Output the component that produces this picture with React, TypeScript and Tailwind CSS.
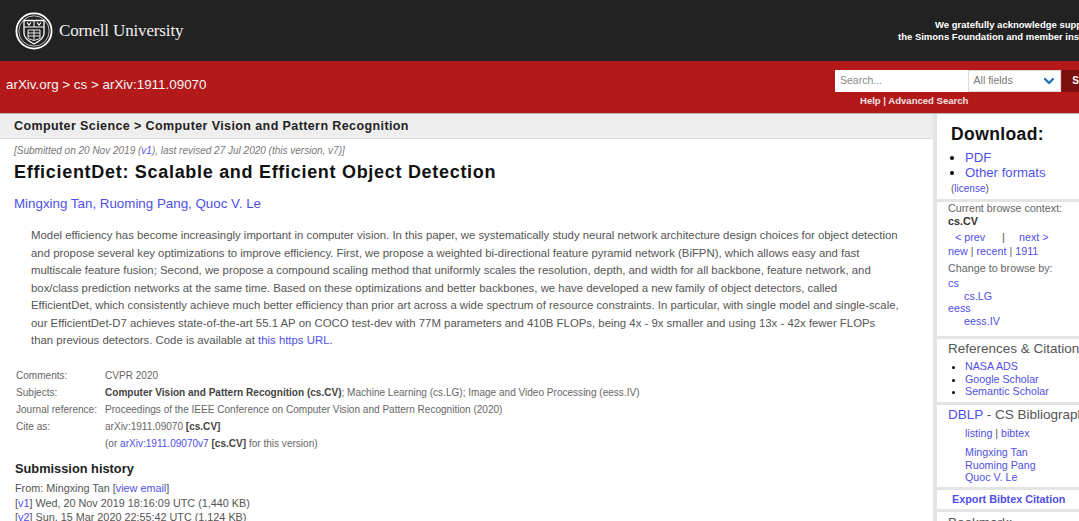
import { ChevronDown } from "lucide-react";

const link = "text-[#4f4fe8]";

const Crest = () => (
  <svg width="38" height="38" viewBox="0 0 38 38" fill="none" stroke="#fff">
    <circle cx="19" cy="19" r="17.6" strokeWidth="1.8" />
    <circle cx="19" cy="19" r="15.2" strokeWidth="0.7" />
    <path d="M9 8.500h20v13c0 5-5 8-10 10.500-5-2.500-10-5.500-10-10.500z" strokeWidth="1.300" />
    <path d="M9 15h20M19 8.500V15" strokeWidth="1" />
    <path d="M12 10.500l2 2.500 2-2.500M22 10.500l2 2.500 2-2.500" strokeWidth="1.200" />
    <path d="M13 18h12v8.500l-6 2-6-2zM19 18v10.500M13 21h12M13 24h12" strokeWidth="0.900" />
  </svg>
);

const MetaRow = ({ label, children }: { label: string; children: React.ReactNode }) => (
  <div className="flex h-[16.800px] items-center">
    <span className="w-[89px] shrink-0">{label}</span>
    <span className="whitespace-nowrap">{children}</span>
  </div>
);

const Divider = () => <div className="h-[3px] bg-[#e4e4e4]" />;

export default function App() {
  return (
    <div className="flex h-[521px] w-[1079px] flex-col overflow-hidden bg-white font-['Liberation_Sans',Arial,sans-serif] text-[#333]">
      <header className="flex h-[61px] shrink-0 items-center justify-between overflow-hidden bg-[#222222] text-white">
        <div className="flex items-center pl-[15px]">
          <Crest />
          <span className="ml-[6px] mt-[1px] font-['Liberation_Serif',serif] text-[17px] tracking-[-0.150px] text-[#f1f1f1]">
            Cornell University
          </span>
        </div>
        <div className="w-[181px] shrink-0 whitespace-nowrap text-[9.500px] leading-[12px] font-bold">
          <div className="pl-[37px]">We gratefully acknowledge support from</div>
          <div>the Simons Foundation and member institutions.</div>
        </div>
      </header>

      <div className="flex h-[53px] shrink-0 justify-between border-b border-[#b5b5b5] bg-[#b31919] text-white">
        <div className="pt-[15px] pl-[6px] text-[13.400px] leading-[17px] text-[#f5f5f5]">
          arXiv.org &gt; cs &gt; arXiv:1911.09070
        </div>
        <div className="flex w-[244px] shrink-0 flex-col pt-[9px]">
          <div className="flex h-[22px] items-stretch">
            <div className="flex w-[133px] items-center bg-white pl-[5px] text-[10.500px] text-[#8a8a8a]">Search...</div>
            <div className="flex w-[94px] items-center justify-between border border-[#dbdbdb] bg-white pr-[3px] pl-[5px] text-[10.500px] text-[#777]">
              All fields
              <ChevronDown size={16} strokeWidth={3.500} className="text-[#1f6fb5]" />
            </div>
            <div className="ml-[1px] flex-1 bg-[#7c1010] pt-[5px] pl-[10px] text-[10px] leading-[12px] font-bold">S</div>
          </div>
          <div className="mt-[2px] pl-[25px] text-[9.550px] leading-[13px] font-bold text-[#f0e4e4]">Help | Advanced Search</div>
        </div>
      </div>

      <div className="flex min-h-0 flex-1">
        <main className="w-[933px] shrink-0">
          <div className="flex h-[25px] items-center border-b border-[#dcdcdc] bg-[#eeeeee] pl-[14px] text-[12.500px] font-bold tracking-[0.400px] text-[#222]">
            Computer Science &gt; Computer Vision and Pattern Recognition
          </div>
          <div className="pt-[6px] pl-[14px] text-[10px] leading-[12px] text-[#777] italic">
            [Submitted on 20 Nov 2019 (<span className={link}>v1</span>), last revised 27 Jul 2020 (this version, v7)]
          </div>
          <h1 className="mt-[4px] pl-[14px] text-[18px] leading-[22px] font-bold tracking-[0.700px] text-[#111]">
            EfficientDet: Scalable and Efficient Object Detection
          </h1>
          <div className={`mt-[12px] pl-[14px] text-[13.350px] leading-[18px] ${link}`}>
            Mingxing Tan, Ruoming Pang, Quoc V. Le
          </div>
          <p className="mt-[14px] w-[880px] pl-[31px] text-[11.380px] leading-[17.500px] whitespace-nowrap text-[#555]">
            Model efficiency has become increasingly important in computer vision. In this paper, we systematically study neural network architecture design choices for object detection
            <br />
            and propose several key optimizations to improve efficiency. First, we propose a weighted bi-directional feature pyramid network (BiFPN), which allows easy and fast
            <br />
            multiscale feature fusion; Second, we propose a compound scaling method that uniformly scales the resolution, depth, and width for all backbone, feature network, and
            <br />
            box/class prediction networks at the same time. Based on these optimizations and better backbones, we have developed a new family of object detectors, called
            <br />
            EfficientDet, which consistently achieve much better efficiency than prior art across a wide spectrum of resource constraints. In particular, with single model and single-scale,
            <br />
            our EfficientDet-D7 achieves state-of-the-art 55.1 AP on COCO test-dev with 77M parameters and 410B FLOPs, being 4x - 9x smaller and using 13x - 42x fewer FLOPs
            <br />
            than previous detectors. Code is available at <span className={link}>this https URL</span>.
          </p>
          <div className="mt-[18px] pl-[16px] text-[10.050px] text-[#666]">
            <MetaRow label="Comments:">CVPR 2020</MetaRow>
            <MetaRow label="Subjects:">
              <b className="text-[#444]">Computer Vision and Pattern Recognition (cs.CV)</b>; Machine Learning (cs.LG); Image and Video Processing (eess.IV)
            </MetaRow>
            <MetaRow label="Journal reference:">Proceedings of the IEEE Conference on Computer Vision and Pattern Recognition (2020)</MetaRow>
            <MetaRow label="Cite as:">
              arXiv:1911.09070 <b className="text-[#444]">[cs.CV]</b>
            </MetaRow>
            <MetaRow label="">
              (or <span className={link}>arXiv:1911.09070v7</span> <b className="text-[#444]">[cs.CV]</b> for this version)
            </MetaRow>
          </div>
          <h2 className="mt-[10px] pl-[15px] text-[12.800px] leading-[16px] font-bold text-[#222]">Submission history</h2>
          <div className="mt-[4px] pl-[15px] text-[10.820px] leading-[14.500px] text-[#555]">
            <div>
              From: Mingxing Tan [<span className={link}>view email</span>]
            </div>
            <div>
              [<span className={link}>v1</span>] Wed, 20 Nov 2019 18:16:09 UTC (1,440 KB)
            </div>
            <div>
              [<span className={link}>v2</span>] Sun, 15 Mar 2020 22:55:42 UTC (1,124 KB)
            </div>
          </div>
        </main>

        <aside className="w-[146px] shrink-0 border-l-[4px] border-[#e4e4e4] whitespace-nowrap">
          <div className="h-[85px] pt-[10px] pl-[14px]">
            <h2 className="text-[17.500px] leading-[21px] font-bold tracking-[0.400px] text-[#111]">Download:</h2>
            <ul className={`mt-[5px] list-disc pl-[14px] text-[13.200px] leading-[15px] ${link} marker:text-black`}>
              <li>PDF</li>
              <li>Other formats</li>
            </ul>
            <div className="mt-[2px] text-[10px] leading-[13px] text-[#555]">
              (<span className={link}>license</span>)
            </div>
          </div>
          <Divider />
          <div className="h-[134px] pl-[11px] text-[10.750px] leading-[13px] text-[#666]">
            <div>Current browse context:</div>
            <div className="font-bold text-[#333]">cs.CV</div>
            <div className={`mt-[3px] flex pl-[7px] ${link}`}>
              <span className="w-[47px]">&lt; prev</span>
              <span className="w-[17px] text-[#555]">|</span>
              <span>next &gt;</span>
            </div>
            <div className="mt-[1px]">
              <span className={link}>new</span> | <span className={link}>recent</span> | <span className={link}>1911</span>
            </div>
            <div className="mt-[4px]">Change to browse by:</div>
            <div className={`mt-[2px] leading-[12.600px] ${link}`}>
              <div>cs</div>
              <div className="pl-[16px]">cs.LG</div>
              <div>eess</div>
              <div className="pl-[16px]">eess.IV</div>
            </div>
          </div>
          <Divider />
          <div className="h-[63px] pt-[2px] pl-[11px]">
            <h3 className="text-[13.500px] leading-[16px] text-[#555]">References &amp; Citations</h3>
            <ul className={`mt-[3px] list-disc pl-[17px] text-[10.700px] leading-[12.700px] ${link} marker:text-black`}>
              <li>NASA ADS</li>
              <li>Google Scholar</li>
              <li>Semantic Scholar</li>
            </ul>
          </div>
          <Divider />
          <div className="h-[82px] pt-[2px] pl-[11px]">
            <h3 className="text-[13.500px] leading-[16px] text-[#555]">
              <span className={link}>DBLP</span> - CS Bibliography
            </h3>
            <div className={`mt-[4px] pl-[17px] text-[10.700px] leading-[13px] ${link}`}>
              listing <span className="text-[#555]">|</span> bibtex
            </div>
            <div className={`mt-[6px] pl-[17px] text-[10.700px] leading-[12.700px] ${link}`}>
              <div>Mingxing Tan</div>
              <div>Ruoming Pang</div>
              <div>Quoc V. Le</div>
            </div>
          </div>
          <Divider />
          <div className={`h-[19px] pt-[3px] pl-[15px] text-[10.800px] leading-[13px] font-bold ${link}`}>Export Bibtex Citation</div>
          <Divider />
          <div className="pt-[3px] pl-[11px] text-[13.500px] leading-[16px] text-[#555]">Bookmark:</div>
        </aside>
      </div>
    </div>
  );
}
